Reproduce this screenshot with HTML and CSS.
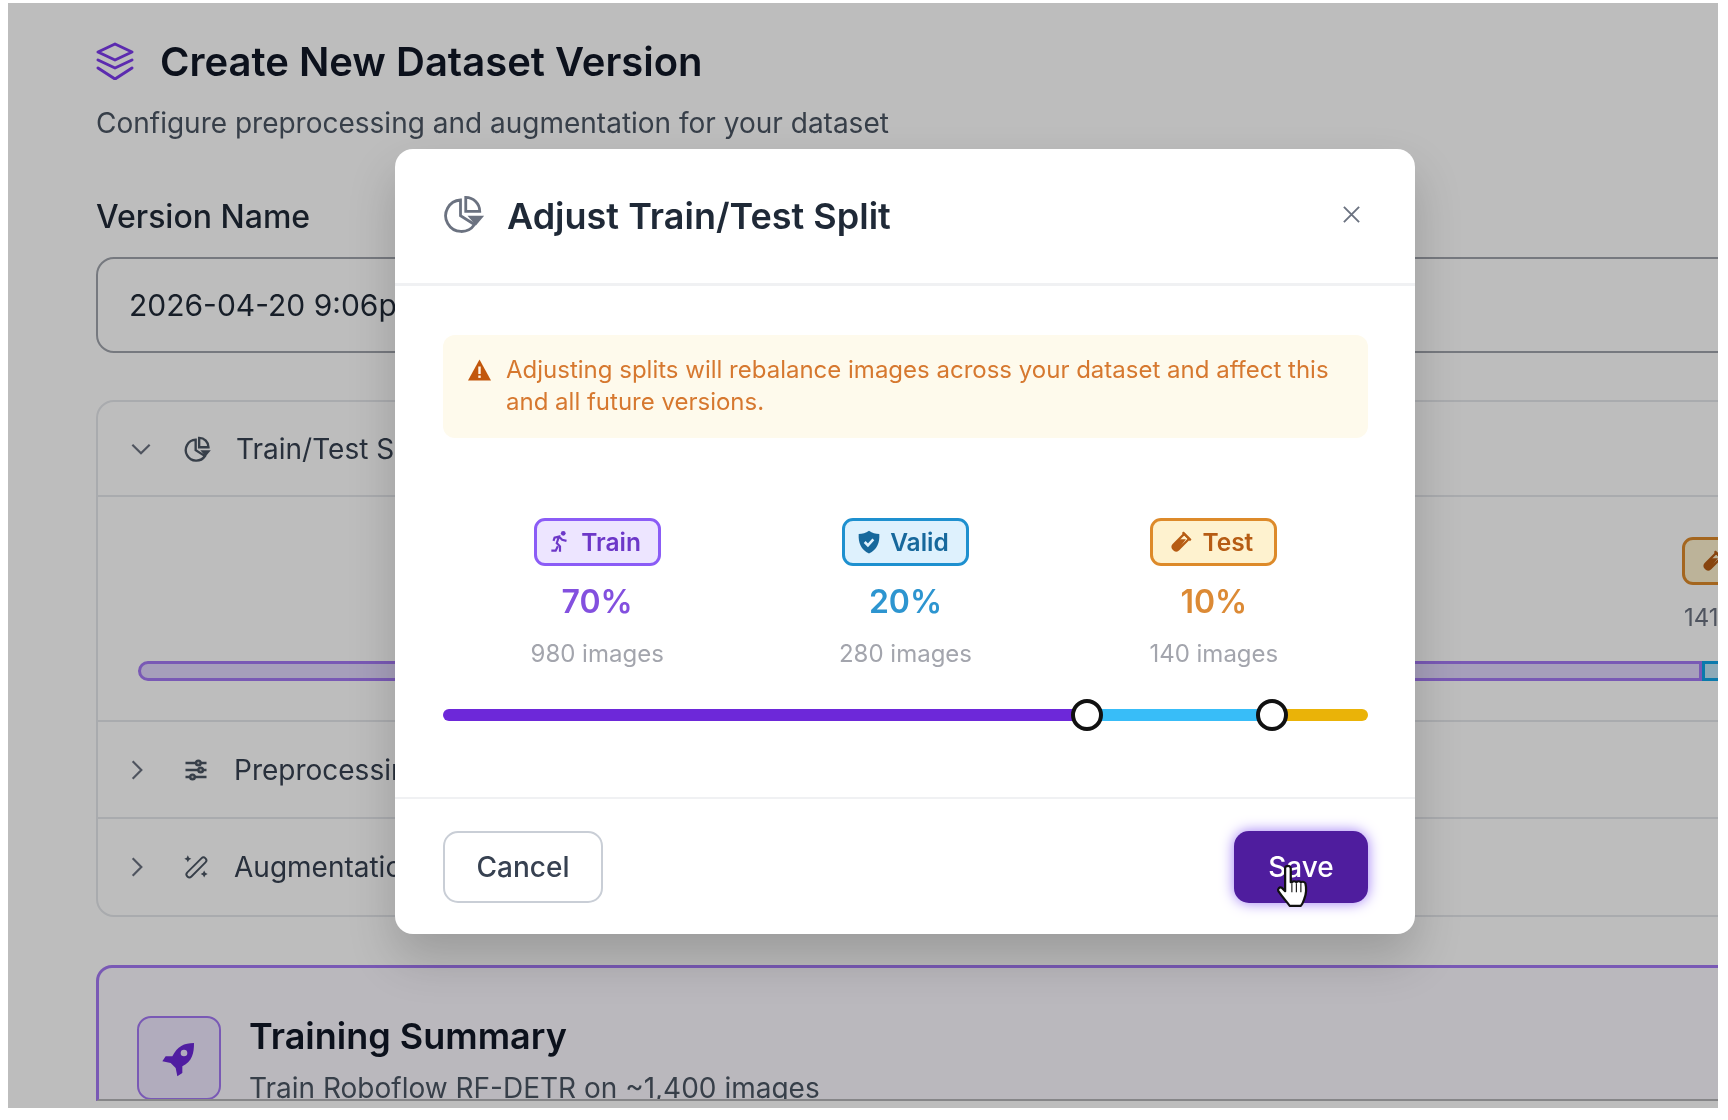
FILE: index.html
```html
<!DOCTYPE html>
<html lang="en">
<head>
    <meta charset="UTF-8">
    <meta name="viewport" content="width=device-width, initial-scale=1.0">
    <title>Create New Dataset Version</title>
    <link rel="stylesheet" href="styles.css">
</head>
<body>
    <div class="screen">
        <main class="page">
            <div class="page-title">
                <svg class="stack-icon" viewBox="3 2.500 18 19"><path d="M12 3.500 3.500 7.500 12 11.500l8.500-4z"/><path d="M3.500 11.500 12 15.500l8.500-4"/><path d="M3.500 15.500 12 21l8.500-5.500"/></svg>
                <h1>Create New Dataset Version</h1>
            </div>
            <p class="page-sub">Configure preprocessing and augmentation for your dataset</p>

            <label class="field-label">Version Name</label>
            <div class="field-input">2026-04-20 9:06pm</div>

            <section class="panel">
                <div class="panel-row">
                    <svg class="chevron" viewBox="0 0 24 24"><path d="m4 8 8 8 8-8"/></svg>
                    <svg class="row-icon" viewBox="0 0 24 24"><path d="M10 4a9 9 0 1 0 8 14l-8-5z"/><path d="M13 2.500a8 8 0 0 1 8 8h-8z"/><path class="solid" d="M14 13h9l-4.500 5.500z"/></svg>
                    <span class="row-label">Train/Test Split</span>
                </div>
                <div class="split-body">
                    <div class="split-stats">
                        <div class="stat">
                            <span class="badge badge-test">
                                <svg class="badge-icon" viewBox="0 0 24 24"><path class="tube" d="M15 4.500 19.500 9 9.500 19A3.200 3.200 0 0 1 5 14.500z"/><path d="M10 9.500h6.500L9.500 19A3.200 3.200 0 0 1 5 14.500z"/><path class="tube" d="M13.500 3 21 10.500"/></svg>
                                Test
                            </span>
                            <span class="stat-count">141 images</span>
                        </div>
                    </div>
                    <div class="split-bar">
                        <div class="seg-train"></div>
                        <div class="seg-valid"></div>
                    </div>
                </div>
                <div class="panel-row row-tall">
                    <svg class="chevron chevron-right" viewBox="0 0 24 24"><path d="m8 4 8 8-8 8"/></svg>
                    <svg class="row-icon" viewBox="0 0 24 24"><path d="M3 6h18M3 12h18M3 18h18"/><circle class="knob" cx="14" cy="6" r="2"/><circle class="knob" cx="16" cy="12" r="2"/><circle class="knob" cx="9" cy="18" r="2"/></svg>
                    <span class="row-label">Preprocessing</span>
                </div>
                <div class="panel-row row-tall">
                    <svg class="chevron chevron-right" viewBox="0 0 24 24"><path d="m8 4 8 8-8 8"/></svg>
                    <svg class="row-icon wand" viewBox="0 0 24 24"><rect x="1" y="10" width="22" height="5" rx="2.500" transform="rotate(-45 12 12)"/><path class="solid" d="m5 2 1 2 2 1-2 1-1 2-1-2-2-1 2-1zM19 15l1 2 2 1-2 1-1 2-1-2-2-1 2-1z"/></svg>
                    <span class="row-label">Augmentation</span>
                </div>
            </section>

            <section class="summary">
                <div class="summary-icon">
                    <svg viewBox="0 0 24 24"><path d="M21 3c-6 0-10 2-13 8H4l-2 3 5 1 3 3 1 5 3-2v-4c6-3 7-8 7-14zM15 7a2 2 0 1 1 0 4 2 2 0 0 1 0-4z" fill-rule="evenodd"/></svg>
                </div>
                <div>
                    <h2>Training Summary</h2>
                    <p>Train Roboflow RF-DETR on ~1,400 images</p>
                </div>
            </section>
        </main>

        <div class="scrim">
            <div class="modal">
                <div class="modal-head">
                    <svg class="modal-icon" viewBox="0 0 24 24"><path d="M10 4a9 9 0 1 0 8 14l-8-5z"/><path d="M13 2.500a8 8 0 0 1 8 8h-8z"/><path class="solid" d="M14 13h9.500l-4.700 5.500z"/></svg>
                    <h3>Adjust Train/Test Split</h3>
                    <svg class="close-icon" viewBox="0 0 20 20"><path d="m2 2 16 16M18 2 2 18"/></svg>
                </div>

                <div class="modal-body">
                    <div class="alert">
                        <svg class="alert-icon" viewBox="0 0 24 24"><path d="M12 1.500 23.500 22.500H.5z"/><rect x="10.800" y="8.500" width="2.400" height="7.500" fill="#fff7ea"/><rect x="10.800" y="17.500" width="2.400" height="2.400" fill="#fff7ea"/></svg>
                        <p>Adjusting splits will rebalance images across your dataset and affect this and all future versions.</p>
                    </div>

                    <div class="stat-grid">
                        <div class="stat">
                            <span class="badge badge-train">
                                <svg class="badge-icon run" viewBox="0 0 24 24"><circle cx="15" cy="4" r="2.200"/><path d="m4 20 4 0 2-4M12 21v-5l-3-3 2-6-4 1-1 3M11 7l3 3 4 1"/></svg>
                                Train
                            </span>
                            <span class="stat-pct pct-train">70%</span>
                            <span class="stat-count">980 images</span>
                        </div>
                        <div class="stat">
                            <span class="badge badge-valid">
                                <svg class="badge-icon" viewBox="0 0 24 24"><path d="M12 1.500c3 2 6 3 9.500 3 .5 8-2 14.500-9.500 18-7.500-3.500-10-10-9.500-18 3.500 0 6.500-1 9.500-3z"/><path class="tick" d="m8 12 3 3 5-5.500"/></svg>
                                Valid
                            </span>
                            <span class="stat-pct pct-valid">20%</span>
                            <span class="stat-count">280 images</span>
                        </div>
                        <div class="stat">
                            <span class="badge badge-test">
                                <svg class="badge-icon" viewBox="0 0 24 24"><path class="tube" d="M15 4.500 19.500 9 9.500 19A3.200 3.200 0 0 1 5 14.500z"/><path d="M10 9.500h6.500L9.500 19A3.200 3.200 0 0 1 5 14.500z"/><path class="tube" d="M13.500 3 21 10.500"/></svg>
                                Test
                            </span>
                            <span class="stat-pct pct-test">10%</span>
                            <span class="stat-count">140 images</span>
                        </div>
                    </div>

                    <div class="slider">
                        <div class="track-train"></div>
                        <div class="track-valid"></div>
                        <div class="track-test"></div>
                        <span class="thumb" style="left: 69.6%"></span>
                        <span class="thumb" style="left: 89.6%"></span>
                    </div>
                </div>

                <div class="modal-foot">
                    <button type="button" class="btn-cancel">Cancel</button>
                    <button type="button" class="btn-save">Save</button>
                </div>
            </div>
        </div>

        <svg class="cursor" viewBox="0 0 32 40"><path d="M10 3c2-1 4 0 4 2v12l1 0c1-1 3-1 4 0 1-1 3-1 4 0 1-.5 3-.5 4 1 1 4 1 9-1 14-1 3-2 5-3 6H13c-2-3-6-7-10-13-1-2 1-4 3-3l3 3V5c0-1 0-2 1-2z"/><path class="finger" d="M15 18v8M19 18v8M23 18v8"/></svg>
    </div>
</body>
</html>
```

FILE: styles.css
```css
* {
    box-sizing: border-box;
}

body {
    margin: 0;
    background-color: white;
    font-family: Inter, "Noto Sans", sans-serif;
    color: #111827;
}

.screen {
    position: relative;
    width: 1710px;
    height: 1105px;
    margin: 3px 0 0 8px;
    overflow: hidden;
    background-color: white;
    filter: blur(0.6px);
}

.page {
    width: 1803px;
    padding: 35px 0 0 88px;
}

.page-title {
    display: flex;
    align-items: center;
    gap: 26px;
    height: 46px;
}

.stack-icon {
    width: 38px;
    height: 38px;
    fill: none;
    stroke: #7c3aed;
    stroke-width: 1.500;
    stroke-linejoin: round;
    stroke-linecap: round;
}

h1 {
    margin: 0;
    font-size: 40px;
    font-weight: 600;
}

.page-sub {
    margin: 21px 0 0;
    font-size: 28px;
    line-height: 36px;
    color: #4b5563;
}

.field-label {
    display: block;
    margin-top: 56px;
    font-size: 32px;
    line-height: 40px;
    font-weight: 500;
    color: #1f2937;
}

.field-input {
    display: flex;
    align-items: center;
    height: 96px;
    margin-top: 20px;
    padding-left: 31px;
    border: 2px solid #a0a4ac;
    border-radius: 18px;
    font-size: 30px;
    color: #1f2937;
}

.panel {
    margin-top: 47px;
    border: 2px solid #e5e7eb;
    border-radius: 18px;
}

.panel-row {
    display: flex;
    align-items: center;
    height: 95px;
    padding-left: 30px;
    border-bottom: 2px solid #e5e7eb;
}

.row-tall {
    height: 97px;
}

.row-tall:last-child {
    height: 96px;
    border-bottom: none;
}

.chevron {
    width: 26px;
    height: 26px;
    margin-right: 30px;
    fill: none;
    stroke: #6b7280;
    stroke-width: 2;
}

.chevron-right {
    margin-left: -4px;
    margin-right: 32px;
}

.row-icon {
    width: 28px;
    height: 28px;
    margin-right: 24px;
    fill: none;
    stroke: #4b5563;
    stroke-width: 2;
}

.row-icon .solid {
    fill: #4b5563;
    stroke: none;
}

.row-icon .knob {
    fill: #bdbdbd;
}

.row-icon.wand {
    stroke-width: 1.600;
}

.row-label {
    font-size: 28px;
    color: #374151;
}

.split-body {
    height: 225px;
    padding: 40px 0 0 40px;
    border-bottom: 2px solid #e5e7eb;
}

.split-stats {
    display: flex;
    justify-content: flex-end;
}

.split-bar {
    display: flex;
    height: 20px;
    margin-top: 27px;
}

.seg-train {
    width: 1564px;
    border: 3px solid #a478f5;
    border-radius: 10px 0 0 10px;
    background-color: #e1d7fd;
}

.seg-valid {
    flex: 1;
    border: 3px solid #0ea5e9;
    background-color: #bfe6f8;
}

.summary {
    display: flex;
    gap: 28px;
    height: 136px;
    margin-top: 48px;
    padding: 48px 0 0 38px;
    overflow: hidden;
    border: 3px solid #a478f5;
    border-bottom: 2px solid #b5b5b8;
    border-radius: 16px 16px 0 0;
    background-color: #fbf9ff;
}

.summary-icon {
    display: flex;
    flex: none;
    align-items: center;
    justify-content: center;
    width: 84px;
    height: 84px;
    border: 2px solid #a478f5;
    border-radius: 14px;
    background-color: #efe8ff;
}

.summary-icon svg {
    width: 40px;
    height: 40px;
    fill: #6d28d9;
}

.summary h2 {
    margin: -2px 0 0;
    font-size: 36px;
    line-height: 44px;
    font-weight: 600;
}

.summary p {
    margin: 13px 0 0;
    font-size: 28px;
    line-height: 34px;
    color: #4b5563;
}

.scrim {
    position: absolute;
    inset: 0;
    padding: 146px 0 0 387px;
    background-color: rgba(0, 0, 0, 0.26);
}

.modal {
    width: 1020px;
    height: 785px;
    border-radius: 18px;
    background-color: white;
    box-shadow: 0 24px 48px rgba(0, 0, 0, 0.18);
}

.modal-head {
    display: flex;
    align-items: center;
    height: 137px;
    padding: 0 54px 4px 48px;
    border-bottom: 3px solid #f0f1f3;
}

.modal-icon {
    width: 42px;
    height: 42px;
    margin-right: 22px;
    fill: none;
    stroke: #6b7280;
    stroke-width: 1.600;
}

.modal-icon .solid {
    fill: #6b7280;
    stroke: none;
}

h3 {
    flex: 1;
    margin: 4px 0 0;
    font-size: 36px;
    font-weight: 600;
    color: #1f2937;
}

.close-icon {
    width: 19px;
    height: 19px;
    fill: none;
    stroke: #6b7280;
    stroke-width: 2;
}

.modal-body {
    height: 513px;
    padding: 49px 47px 0 48px;
    border-bottom: 2px solid #f0f1f3;
}

.alert {
    display: flex;
    gap: 14px;
    height: 103px;
    padding: 19px 24px;
    border-radius: 12px;
    background-color: #fefaec;
}

.alert-icon {
    flex: none;
    width: 25px;
    height: 24px;
    margin-top: 4px;
    fill: #c2570c;
}

.alert p {
    margin: 0;
    font-size: 24px;
    line-height: 32px;
    color: #d6782f;
}

.stat-grid {
    display: grid;
    grid-template-columns: repeat(3, 1fr);
    margin-top: 80px;
}

.stat {
    display: flex;
    flex-direction: column;
    align-items: center;
}

.badge {
    display: inline-flex;
    align-items: center;
    justify-content: center;
    gap: 8px;
    width: 127px;
    height: 48px;
    padding-right: 6px;
    border: 3px solid;
    border-radius: 11px;
    font-size: 24.500px;
    font-weight: 600;
}

.badge-icon {
    width: 26px;
    height: 26px;
    fill: currentColor;
}

.badge-icon.run {
    fill: none;
    stroke: currentColor;
    stroke-width: 2;
}

.badge-icon.run circle {
    fill: currentColor;
    stroke: none;
}

.badge-icon .tube {
    fill: none;
    stroke: currentColor;
    stroke-width: 2;
}

.tick {
    fill: none;
    stroke: #e0f2fe;
    stroke-width: 2.400;
}

.badge-train {
    border-color: #8b5cf6;
    background-color: #ede5ff;
    color: #6d38c8;
}

.badge-valid {
    border-color: #1e90cf;
    background-color: #def1fd;
    color: #17689c;
}

.badge-test {
    border-color: #dd8a2a;
    background-color: #fef2cf;
    color: #b65c14;
}

.stat-pct {
    margin-top: 14px;
    font-size: 32px;
    line-height: 44px;
    font-weight: 600;
}

.pct-train {
    color: #8350df;
}

.pct-valid {
    color: #2d95d0;
}

.pct-test {
    color: #dc8a35;
}

.stat-count {
    margin-top: 14px;
    font-size: 24px;
    line-height: 32px;
    color: #a3a5ad;
}

.split-stats .stat-count {
    margin-top: 17px;
    color: #6b7280;
}

.slider {
    position: relative;
    display: flex;
    height: 12px;
    margin-top: 39px;
    border-radius: 6px;
}

.track-train {
    width: 69.6%;
    border-radius: 6px 0 0 6px;
    background-color: #6d28d9;
}

.track-valid {
    width: 20%;
    background-color: #38bdf8;
}

.track-test {
    flex: 1;
    border-radius: 0 6px 6px 0;
    background-color: #eab308;
}

.thumb {
    position: absolute;
    top: 6px;
    width: 32px;
    height: 32px;
    border: 4px solid #111;
    border-radius: 50%;
    background-color: white;
    transform: translate(-50%, -50%);
}

.modal-foot {
    display: flex;
    justify-content: space-between;
    padding: 32px 47px 0 48px;
}

.modal-foot button {
    height: 72px;
    border-radius: 15px;
    font-family: inherit;
    font-size: 28px;
    font-weight: 500;
}

.btn-cancel {
    width: 160px;
    border: 2px solid #c9ced6;
    background-color: white;
    color: #374151;
}

.btn-save {
    width: 134px;
    border: none;
    background-color: #4f1d9e;
    box-shadow: 0 0 14px #9d7bf5;
    color: white;
}

.cursor {
    position: absolute;
    left: 1267px;
    top: 860px;
    width: 36px;
    height: 45px;
    fill: white;
    stroke: #111;
    stroke-width: 2;
    stroke-linejoin: round;
}

.cursor .finger {
    stroke-width: 1;
}
```
